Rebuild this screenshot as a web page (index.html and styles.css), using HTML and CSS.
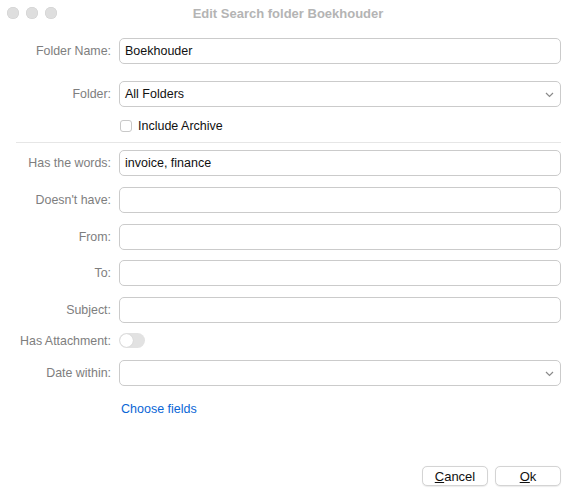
FILE: index.html
```html
<!DOCTYPE html>
<html>
<head>
<meta charset="utf-8">
<link rel="stylesheet" href="styles.css">
</head>
<body>
<div class="window">
  <div class="titlebar">
    <div class="lights">
      <span class="light"></span><span class="light"></span><span class="light"></span>
    </div>
    <div class="title">Edit Search folder Boekhouder</div>
  </div>
  <div class="form">
    <div class="row r-name">
      <label class="lbl">Folder Name:</label>
      <div class="field">Boekhouder</div>
    </div>
    <div class="row r-folder">
      <label class="lbl">Folder:</label>
      <div class="field select">All Folders
        <svg class="chev" width="9" height="6" viewBox="0 0 9 6"><path d="M1 1 L4.5 4.5 L8 1" fill="none" stroke="#8a8a8a" stroke-width="1.2"/></svg>
      </div>
    </div>
    <div class="row r-check">
      <span></span>
      <div class="check"><span class="box"></span><span>Include Archive</span></div>
    </div>
    <div class="sep"></div>
    <div class="row r-words">
      <label class="lbl">Has the words:</label>
      <div class="field">invoice, finance</div>
    </div>
    <div class="row r-std">
      <label class="lbl">Doesn't have:</label>
      <div class="field"></div>
    </div>
    <div class="row r-std">
      <label class="lbl">From:</label>
      <div class="field"></div>
    </div>
    <div class="row r-std r-tight">
      <label class="lbl">To:</label>
      <div class="field"></div>
    </div>
    <div class="row r-std">
      <label class="lbl">Subject:</label>
      <div class="field"></div>
    </div>
    <div class="row r-toggle">
      <label class="lbl">Has Attachment:</label>
      <div><span class="toggle"><span class="knob"></span></span></div>
    </div>
    <div class="row r-date">
      <label class="lbl">Date within:</label>
      <div class="field select">
        <svg class="chev" width="9" height="6" viewBox="0 0 9 6"><path d="M1 1 L4.5 4.5 L8 1" fill="none" stroke="#8a8a8a" stroke-width="1.2"/></svg>
      </div>
    </div>
    <div class="row r-link">
      <span></span>
      <a class="link">Choose fields</a>
    </div>
  </div>
  <div class="buttons">
    <button class="btn"><u>C</u>ancel</button>
    <button class="btn"><u>O</u>k</button>
  </div>
</div>
</body>
</html>
```
FILE: styles.css
```css
html, body {
  margin: 0;
  padding: 0;
  background: #ffffff;
}
body {
  font-family: "Liberation Sans", Arial, sans-serif;
  font-size: 12px;
  color: #1a1a1a;
}
.window {
  width: 577px;
  height: 500px;
  display: flex;
  flex-direction: column;
}
.titlebar {
  height: 26px;
  display: flex;
  align-items: center;
  position: relative;
}
.lights {
  display: flex;
  gap: 7px;
  padding-left: 7px;
}
.light {
  width: 12px;
  height: 12px;
  border-radius: 50%;
  background: #dedede;
  box-shadow: inset 0 0 0 0.5px #cfcfcf;
}
.title {
  flex: 1;
  text-align: center;
  font-weight: bold;
  font-size: 13px;
  color: #b4b4b4;
  margin-right: 58px;
}
.form {
  display: flex;
  flex-direction: column;
  padding-right: 16px;
}
.row {
  display: grid;
  grid-template-columns: 111px 1fr;
  column-gap: 8px;
  align-items: center;
}
.lbl {
  text-align: right;
  color: #7e7e7e;
  font-size: 12.4px;
}
.field {
  height: 26px;
  box-sizing: border-box;
  border: 1px solid #cbcbcb;
  border-radius: 5px;
  padding: 0 5px;
  display: flex;
  align-items: center;
  color: #111;
  font-size: 12.5px;
  position: relative;
}
.select {
  justify-content: space-between;
}
.chev {
  position: absolute;
  right: 6px;
  top: 10px;
}
.r-name { margin-top: 12px; }
.r-folder { margin-top: 17px; }
.r-check { margin-top: 12px; height: 14px; }
.check {
  display: flex;
  align-items: center;
  gap: 6px;
  padding-left: 1px;
  font-size: 12.5px;
  color: #111;
}
.box {
  width: 12px;
  height: 12px;
  box-sizing: border-box;
  border: 1px solid #c9c9c9;
  border-radius: 3px;
  background: #fff;
}
.sep {
  margin: 9px 0 0 16px;
  height: 1px;
  background: #e6e6e6;
}
.r-words { margin-top: 7px; }
.r-std { margin-top: 11px; }
.r-std.r-tight { margin-top: 10px; }
.r-toggle { margin-top: 10px; height: 14px; }
.toggle {
  display: block;
  width: 26px;
  height: 15px;
  border-radius: 8px;
  background: #e2e2e2;
  position: relative;
}
.knob {
  position: absolute;
  left: 1px;
  top: 1px;
  width: 13px;
  height: 13px;
  border-radius: 50%;
  background: #fff;
  box-shadow: 0 0 1px rgba(0,0,0,0.2);
}
.r-date { margin-top: 13px; }
.r-link { margin-top: 16px; }
.link {
  color: #0a66d6;
  font-size: 12.5px;
  padding-left: 2px;
}
.buttons {
  margin-top: auto;
  margin-bottom: 14px;
  display: flex;
  justify-content: flex-end;
  gap: 7px;
  padding-right: 16px;
}
.btn {
  width: 66px;
  height: 20px;
  box-sizing: border-box;
  border: 1px solid #d4d4d4;
  border-radius: 5px;
  background: #fff;
  font-family: "Liberation Sans", Arial, sans-serif;
  font-size: 13px;
  color: #111;
  padding: 0;
  box-shadow: 0 0.5px 1px rgba(0,0,0,0.08);
}
```
